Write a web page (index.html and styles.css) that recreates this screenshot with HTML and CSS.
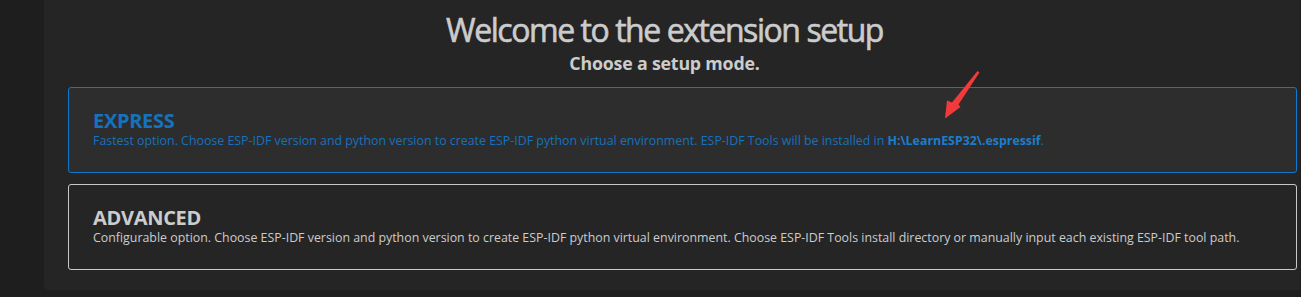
FILE: index.html
```html
<!DOCTYPE html>
<html>
<head>
<meta charset="utf-8">
<link rel="stylesheet" href="styles.css">
</head>
<body>
<div class="app">
  <div class="sidebar"></div>
  <main class="panel">
    <header class="head">
      <h1 class="title">Welcome to the extension setup</h1>
      <h2 class="subtitle">Choose a setup mode.</h2>
    </header>
    <div class="cards">
      <div class="card card-express">
        <h3 class="card-title">EXPRESS</h3>
        <p class="card-desc">Fastest option. Choose ESP-IDF version and python version to create ESP-IDF python virtual environment. ESP-IDF Tools will be installed in <strong>H:\LearnESP32\.espressif</strong>.</p>
      </div>
      <div class="card card-advanced">
        <h3 class="card-title">ADVANCED</h3>
        <p class="card-desc">Configurable option. Choose ESP-IDF version and python version to create ESP-IDF python virtual environment. Choose ESP-IDF Tools install directory or manually input each existing ESP-IDF tool path.</p>
      </div>
    </div>
    <svg class="arrow" width="44" height="52" viewBox="0 0 44 52">
      <path d="M37.5 1 L39.5 2.5 L18.5 34.5 L20.5 37 L5 48.5 L7 30.5 L12 32.5 Z" fill="#f23a3a"/>
    </svg>
  </main>
</div>
</body>
</html>
```
FILE: styles.css
```css
html, body {
  margin: 0;
  padding: 0;
  background: #1e1e1e;
  font-family: "Open Sans", "Noto Sans", sans-serif;
}
.app {
  display: flex;
  height: 297px;
  overflow: hidden;
}
.sidebar {
  width: 44px;
  flex: none;
  background: #1e1e1e;
}
.panel {
  position: relative;
  flex: 1;
  height: 290px;
  background: #252526;
  border-radius: 0 0 0 5px;
  padding: 0 3px 0 24px;
  box-sizing: border-box;
  margin-right: 1px;
}
.head {
  text-align: center;
  padding-right: 36px;
}
.title {
  margin: 0;
  padding-top: 10px;
  font-size: 32px;
  font-weight: 400;
  letter-spacing: -1.45px;
  line-height: 40px;
  color: #cccccc;
  -webkit-text-stroke: 0.6px #cccccc;
}
.subtitle {
  margin: 0;
  padding-top: 2px;
  font-size: 17.8px;
  font-weight: 700;
  letter-spacing: -0.2px;
  line-height: 22px;
  color: #cccccc;
}
.cards {
  display: flex;
  flex-direction: column;
  gap: 11px;
  margin-top: 13px;
}
.card {
  border: 1px solid #c8c8c8;
  border-radius: 3px;
  height: 86px;
  box-sizing: border-box;
  padding: 21px 24px 0 24px;
}
.card-express {
  border-color: #0e78cc;
  background: #2d2d2d;
  color: #1572bd;
}
.card-advanced {
  background: #252526;
  color: #cccccc;
}
.card-title {
  margin: 0;
  font-size: 20px;
  font-weight: 700;
  letter-spacing: -0.3px;
  line-height: 24px;
}
.card-desc {
  margin: 0;
  font-size: 12.38px;
  line-height: 16px;
}
.card-express .card-desc strong {
  color: #1a7ecf;
}
.arrow {
  position: absolute;
  left: 896px;
  top: 70px;
}
```
